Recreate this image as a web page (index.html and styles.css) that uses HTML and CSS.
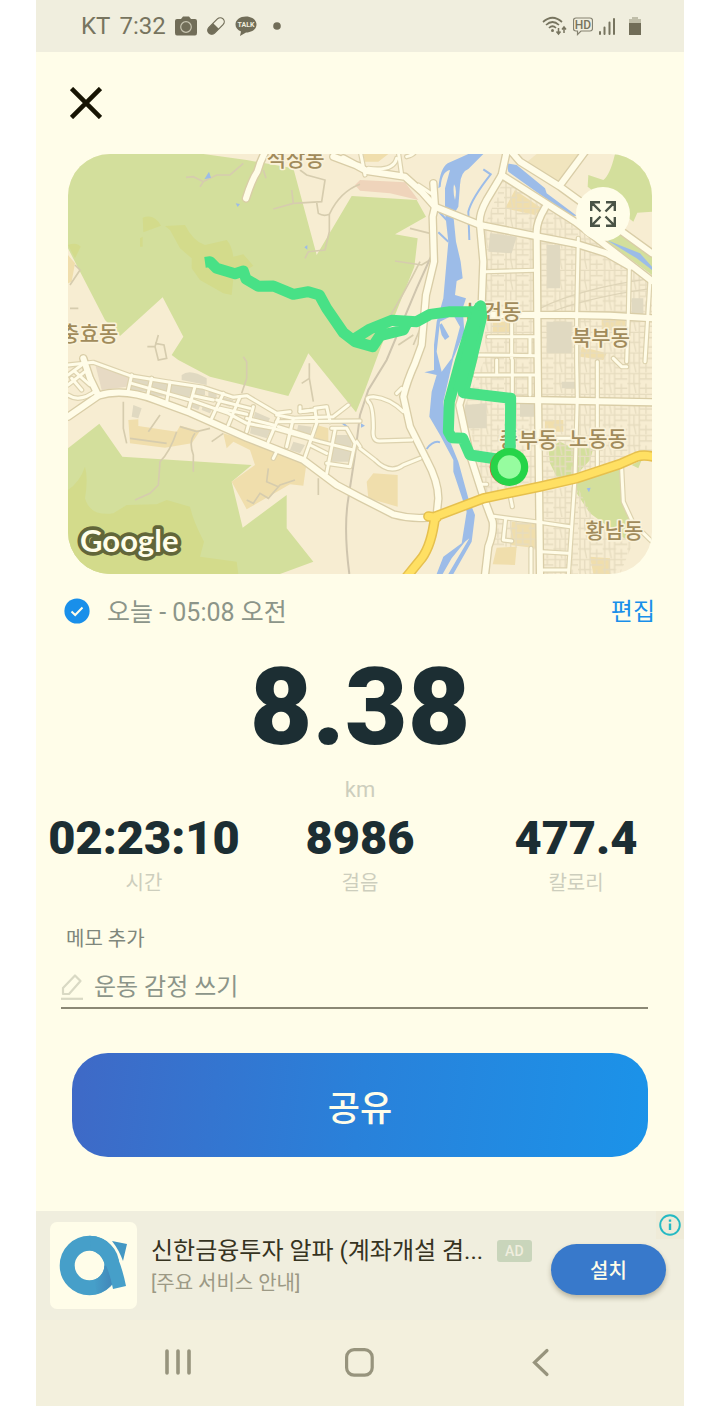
FILE: index.html
```html
<!DOCTYPE html>
<html lang="ko">
<head>
  <meta charset="UTF-8" />
  <meta name="viewport" content="width=device-width, initial-scale=1.0"/>
  <title>운동 기록</title>
  <link rel="stylesheet" href="styles.css">
</head>
<body>
  <div class="phone">
    <div class="status-bar">
      <div class="status-left">
        <span>KT</span>
        <span>7:32</span>
        <svg class="status-camera" width="22" height="20" viewBox="0 0 22 20">
          <path d="M2 3H6L8 0.500H14L16 3H20Q22 3 22 5V17Q22 19.500 20 19.500H2Q0 19.500 0 17V5Q0 3 2 3Z" fill="#716d58"/>
          <circle cx="11" cy="11" r="5.300" fill="none" stroke="#c8c5b1" stroke-width="1.200"/>
        </svg>
        <svg class="status-pill" width="20" height="20" viewBox="0 0 20 20">
          <g transform="rotate(-45 10 10)">
            <rect x="0" y="6" width="20" height="8" rx="4" fill="none" stroke="#716d58" stroke-width="1.200"/>
            <path d="M10 6H4A4 4 0 0 0 4 14H10Z" fill="#716d58"/>
          </g>
        </svg>
        <svg class="status-talk" width="22" height="20" viewBox="0 0 22 20">
          <path d="M11 0.500C17 0.500 21.500 4 21.500 8.500S17 16.500 11 16.500L5 20L6 15.500C2.500 14 0.500 11.500 0.500 8.500C0.500 4 5 0.500 11 0.500Z" fill="#716d58"/>
          <text x="11" y="11" text-anchor="middle" class="talk-text">TALK</text>
        </svg>
        <svg class="status-dot" width="8" height="8" viewBox="0 0 8 8"><circle cx="4" cy="4" r="3.800" fill="#716d58"/></svg>
      </div>
      <div class="status-right">
        <svg width="25" height="20" viewBox="0 0 25 20" fill="none" stroke="#77745f" stroke-width="1.700">
          <path d="M1 6Q10.500 -2.500 20 6M4 9Q10.500 3 17 9M7 12Q10.500 8.500 14 12"/>
          <circle cx="10.500" cy="14.500" r="1.500" fill="#77745f" stroke="none"/>
          <path d="M16.500 12V17M14.500 15.500L16.500 18L18.500 15.500M22 17V12M20 13.500L22 11L24 13.500" stroke-width="1.500"/>
        </svg>
        <svg width="20" height="20" viewBox="0 0 20 20">
          <path d="M3 2H17Q19.500 2 19.500 4.500V12.500Q19.500 15 17 15H8L4.500 18.500V15H3Q0.500 15 0.500 12.500V4.500Q0.500 2 3 2Z" fill="none" stroke="#858270" stroke-width="1.200"/>
          <text x="10" y="13" text-anchor="middle" class="hd-text">HD</text>
        </svg>
        <svg width="16" height="20" viewBox="0 0 16 20" stroke="#77745f" stroke-width="2" stroke-linecap="round">
          <path d="M1 18V16M5.500 18V11.500M10.500 18V6.500M15 18V3"/>
        </svg>
        <svg class="status-battery" width="12" height="20" viewBox="0 0 12 20">
          <path d="M3 1H9V3H12V8H0V3H3Z" fill="#c0bea9"/>
          <path d="M0 7H12V19H0Z" fill="#716d58"/>
        </svg>
      </div>
    </div>

    <div class="top-bar">
      <button class="close-btn" aria-label="닫기">
        <svg width="32" height="32" viewBox="0 0 32 32"><path d="M1.500 1.500L30.500 30.500M30.500 1.500L1.500 30.500" stroke="#171403" stroke-width="4.600"/></svg>
      </button>
    </div>

    <div class="map">
      <svg class="map-canvas" viewBox="24 27 1752 1260">
        <defs>
          <pattern id="blocks" width="74" height="62" patternUnits="userSpaceOnUse">
            <path d="M0 4H74M0 34H40M38 20H74M36 48H74M6 0V62M36 0V62M56 4V20M20 4V34M20 34L26 62M56 34V62" class="block-line"/>
          </pattern>
          <g id="roads-major">
            <path d="M24 815L115 752Q190 728 290 766L390 803L560 878L730 945L830 1020L900 1057L1000 1108Q1050 1122 1100 1118"/>
            <path d="M70 640L90 700L115 752"/>
            <path d="M615 22Q600 50 592 80Q575 105 558 160" class="thin"/>
            <path d="M820 35L900 65M850 40L920 78L1035 95L1085 140L1125 185L1260 240L1420 272L1550 297L1640 325L1710 365"/>
            <path d="M1120 115L1125 185L1118 215L1122 350L1098 450L1085 600L1065 655Q1040 710 1030 755L1050 845L1100 945Q1135 1010 1135 1060L1130 1110"/>
            <path d="M1340 20L1325 90L1280 165Q1255 210 1260 240L1270 350L1265 480L1240 640L1198 780L1230 930L1270 1055L1298 1130Q1302 1160 1285 1205L1275 1290"/>
            <path d="M1325 90L1545 230L1776 408M1350 15L1380 50L1500 125L1776 325M1502 118L1575 20"/>
            <path d="M1455 188Q1430 230 1430 260L1433 645L1440 1290"/>
            <path d="M1270 510H1530L1650 512L1780 520M1365 764L1780 772"/>
          </g>
          <g id="roads-minor">
            <path d="M24 660L100 652L210 692L330 712L430 727L520 757L560 752L650 805L690 800M720 800L765 795L770 830"/>
            <path d="M650 830L900 828M720 800V785M650 810L700 820L820 815L865 780M765 790L800 785L810 830M720 800L765 795"/>
            <path d="M215 690L205 735M275 700L262 755M330 712L320 770M405 725L385 795M490 745L455 820M540 755L505 840M580 785L560 860M655 820L625 890M770 835L735 935M825 855L800 985M700 820L680 905"/>
            <path d="M215 715L390 765L505 805L560 835L640 850L780 890L880 915M400 752L460 765M470 765L570 790M480 790L560 808M560 820L640 840M655 845L750 875M750 900L800 925"/>
            <path d="M815 850L860 850L885 895L870 965L800 955M890 890L900 905M650 920L640 940"/>
            <path d="M24 690L65 660M24 720L75 680M24 750Q60 775 110 735M35 700L65 735M45 680L90 720"/>
            <path d="M900 15L915 90M1015 20L1025 90M925 70Q1000 80 1010 40M1075 120L1120 150M1040 35Q1060 30 1065 20"/>
            <path d="M1275 380L1425 376M1285 575H1430M1255 630L1430 632M1355 520V640M1310 645V685M1245 690H1435M1357 645V755M1410 575V630M1410 695V750"/>
            <path d="M1555 280L1550 510V650L1552 755L1545 1000L1525 1290M1708 370L1705 510L1700 650M1612 650V965M1770 405L1755 650M1660 640L1685 665H1700"/>
            <path d="M1030 800Q990 760 940 755Q915 755 925 770Q940 780 940 850Q935 890 960 888L1055 885M900 910L945 945Q990 990 1030 960L1080 940"/>
            <path d="M1295 1113L1440 1132L1530 1145M1445 1220L1525 1225M1445 1275H1525M1413 1210V1290M1337 1120L1330 1185L1355 1188M1350 1050L1357 1085M1265 1018H1280"/>
            <path d="M1685 970L1690 1070L1720 1135L1776 1190M1440 880H1550M1010 745L1025 730"/>
          </g>
        </defs>

        <!-- land -->
        <rect x="24" y="27" width="1752" height="1260" class="land"/>
        <path d="M24 27H430L560 45L700 70L770 330L875 153L1070 165L1098 215L1005 268L1073 280L1063 365L1005 510L965 600L915 735L888 802L745 625L685 753L450 695L355 645L335 630L370 575L308 457L180 573L135 525L24 310Z" class="forest"/>
        <path d="M24 910L118 836L187 935L575 960L515 1010L548 1148L680 1050V1150L760 1250L660 1287H24Z" class="forest"/>
        <path d="M1665 27Q1650 90 1630 105L1585 90L1583 125L1720 230L1732 203L1776 200V27ZM1640 290L1680 265L1776 325V390Z" class="forest"/>
        <path d="M1465 910L1500 890L1540 910H1600L1590 945L1540 1000L1490 995L1470 955ZM1550 1015L1680 965L1685 1065L1730 1165L1700 1185L1590 1105L1550 1045ZM1715 960L1745 945L1735 970Z" class="forest"/>
        <path d="M315 243L375 240Q400 290 435 300L500 285Q515 300 520 335L550 328L580 362L520 400L515 450L490 445L420 405L395 370V340L360 310L330 255ZM248 218Q282 205 303 242L250 262ZM24 300Q50 290 62 305L45 340ZM240 280L248 275V305H240Z" class="scrub"/>
        <path d="M24 1035Q60 1010 75 965Q85 1000 75 1060Q90 1115 160 1105L200 1080L290 1078L320 1065L390 1085Q400 1130 432 1190L420 1235L530 1250L535 1287H24Z" class="scrub"/>
        <path d="M900 105L1035 112L1075 165L990 145L900 137L885 120Z" class="rose"/>
        <path d="M205 825L235 823V843L350 860L360 842L420 858L395 895L315 908L210 895ZM490 865L620 905L730 945L738 965L730 1022L690 1018L560 1093L515 1010L585 960L570 915L520 890L500 910Z" class="farm"/>
        <path d="M920 1010L940 985L1013 990V1085L925 1060ZM1365 135L1445 190L1425 210L1335 190ZM1455 825H1510V860H1455ZM1355 1130L1430 1138V1210L1350 1200ZM1310 1208L1370 1205L1365 1260L1298 1258ZM1590 1235L1650 1240V1287H1600ZM1565 605L1640 625L1630 645L1560 635ZM1625 525H1695V555H1625ZM770 840L805 850V895L765 880ZM1298 530H1355V565H1298ZM910 27H985L955 50H915ZM24 330L45 355L35 410L24 415Z" class="farm"/>
        <path d="M1390 60L1430 27H1570L1500 115Z" class="tan"/>
        <path d="M105 655L210 695L200 725L125 735Z" class="campus"/>

        <!-- city blocks -->
        <path d="M1330 105L1545 240L1710 365L1776 410V930L1550 990L1275 1050L1215 780L1275 640L1275 240Z" fill="url(#blocks)"/>
        <path d="M1290 1115L1530 1145V1287H1440V1215L1290 1200ZM1450 1040L1550 1020L1600 1120L1720 1190L1680 1287H1530V1140L1450 1120Z" fill="url(#blocks)"/>
        <path d="M1290 265L1370 275L1355 325L1285 320ZM1460 530H1535V625H1460ZM1215 780L1280 775V850H1210ZM1380 770H1425V815H1380ZM1505 710H1545V730H1505ZM1715 460H1750V510H1715ZM1460 300H1500V430H1460Z" class="grey-block"/>
        <path d="M215 695L268 705L260 740L212 735ZM280 705L325 715L318 755L270 750ZM335 715L400 730L380 770L330 755ZM365 690Q390 670 440 700V720L365 705ZM820 870H875V950H815ZM220 780L245 790L235 820L215 815Z" class="grey-block"/>
        <path d="M405 732H435V750H405ZM445 740H470V760H445ZM485 755L520 765L510 785L480 775ZM395 760L425 770L415 795L390 785ZM430 775L460 785L450 805L425 795ZM585 800L630 820L620 840L580 825ZM575 835L635 850L620 880L570 865ZM700 890L735 900L720 925L690 915ZM715 840L755 845L750 870L710 860Z" class="grey-block"/>

        <!-- footpaths and rail -->
        <g class="paths">
          <path d="M378 97L400 95L430 110L470 90L510 90L550 55M430 110L420 125M640 192L700 175L785 170L795 105L740 90L720 75M770 172L775 205Q790 215 808 208V260L795 315L745 320L735 340M808 208Q840 140 900 118M700 175L695 135M610 75L618 100"/>
          <path d="M30 420L60 375L45 360M30 490H55M262 605H285L295 570M285 605L295 645L320 640L312 600L285 595M550 635L560 650V700L545 745M748 655V700L725 715M748 700L760 770"/>
          <path d="M190 770V850L200 895M210 880L320 895M265 860L300 810M350 860Q330 920 300 950L295 1020L270 1045L225 1065M360 845L410 860L450 850M405 865Q385 890 400 930V980M560 1065L580 1075L600 1045L625 1060L660 1020L705 1005M655 1025L620 1010L625 970M490 865L455 890M775 1000V1050"/>
          <path d="M1110 345L1085 360L1005 348M1080 350Q1030 450 980 530M1050 250L1110 265M1015 600L1060 570M1085 540L1060 600"/>
        </g>
        <path d="M885 930L865 1060Q850 1150 868 1287M1115 330L1070 430L980 645L925 735L900 810L885 930" class="rail"/>
        <path d="M1440 490Q1560 430 1776 400M1440 515Q1560 460 1776 430" class="rail thin-rail"/>

        <!-- water -->
        <path d="M1163 55L1200 38L1225 27H1270L1225 72Q1202 80 1200 120L1195 185L1180 210L1188 290L1202 350L1208 400L1190 408L1185 450L1218 460L1208 490L1213 560L1180 640L1150 770L1160 865L1195 950L1225 1060L1245 1110L1235 1190L1180 1287H1165L1228 1180L1215 1190L1175 1240L1148 1287H1130L1150 1235L1205 1195L1220 1100L1180 980V945L1140 870L1108 815L1115 740L1130 690L1093 682L1122 675L1122 600L1130 530L1150 460L1165 290L1155 200L1155 130L1170 75Q1145 80 1142 125L1135 130Q1140 70 1163 55Z" class="water"/>
        <path d="M1340 55L1370 60L1455 130L1460 145L1550 212L1535 213L1435 145L1345 80ZM1640 285L1740 325L1776 365V375L1730 340Z" class="water"/>
        <path d="M1228 285L1225 200Q1235 160 1292 88L1270 73M1132 195L1160 225M1135 262L1165 290M1100 912Q1120 885 1140 892M840 828L865 848" class="stream"/>
        <path d="M433 103L447 80L453 98ZM527 175L540 177L533 186ZM733 307L742 300V314ZM1580 1030L1592 1028L1587 1042ZM903 835L915 842L903 848Z" class="water"/>
        <path d="M1182 118Q1192 130 1185 165Q1178 140 1182 118ZM1140 530L1180 510L1200 545L1175 640L1145 680L1130 620Z" class="land"/>
        <path d="M1145 535L1168 575L1155 585L1145 570L1138 540Z" class="water"/>

        <!-- roads -->
        <use href="#roads-minor" class="minor-casing"/>
        <use href="#roads-major" class="major-casing"/>
        <use href="#roads-minor" class="minor-fill"/>
        <use href="#roads-major" class="major-fill"/>
        <path d="M1040 1295L1085 1240Q1115 1200 1125 1115L1270 1060L1440 1025L1550 1000L1680 957L1730 935Q1750 928 1780 935M1105 1114L1130 1118" class="highway-casing"/>
        <path d="M1040 1295L1085 1240Q1115 1200 1125 1115L1270 1060L1440 1025L1550 1000L1680 957L1730 935Q1750 928 1780 935M1105 1114L1130 1118" class="highway-fill"/>

        <!-- place names -->
        <g class="place">
          <text x="620" y="62">석장동</text>
          <text x="1" y="589">충효동</text>
          <text x="1210" y="522">성건동</text>
          <text x="1536" y="599">북부동</text>
          <text x="1318" y="907">중부동</text>
          <text x="1527" y="903">노동동</text>
          <text x="1576" y="1179">황남동</text>
        </g>

        <!-- recorded route -->
        <path d="M435 352L450 350L470 370L525 386L550 378L558 402L595 424L640 423L700 448L745 440L778 450L800 490L850 563L885 590L938 605L960 572L1030 555L1045 525M885 580L930 552L995 526L1070 530L1110 508L1170 500H1250L1262 482" class="route"/>
        <path d="M1262 482L1240 520L1202 645L1168 770L1165 860L1175 878L1208 880L1230 930L1310 942M1262 482L1265 515L1232 655L1210 743L1352 760L1350 960" class="route"/>
        <path d="M1255 490L1217 655L1195 740" class="route"/>
        <circle cx="1262" cy="482" r="16" fill="#48e186"/>
        <circle cx="1343" cy="967" r="54" fill="#e0563c"/>
        <circle cx="1348" cy="966" r="57" fill="#26d449"/>
        <circle cx="1348" cy="966" r="35" fill="#96fc9f"/>

        <text x="60" y="1222" class="map-brand">Google</text>
      </svg>
      <button class="expand-btn" aria-label="지도 확대">
        <svg width="26" height="26" viewBox="0 0 26 26" fill="none" stroke="#4a5346" stroke-width="2.400">
          <path d="M1.200 10V1.200H10M1.200 1.200L10.500 10.500M16 1.200H24.800V10M24.800 1.200L15.500 10.500M1.200 16V24.800H10M1.200 24.800L10.500 15.500M16 24.800H24.800V16M24.800 24.800L15.500 15.500"/>
        </svg>
      </button>
    </div>

    <div class="date-row">
      <svg width="26" height="26" viewBox="0 0 26 26">
        <circle cx="13" cy="13" r="12.600" fill="#198fea"/>
        <path d="M7.500 13.500L11.200 17L18.500 9.500" fill="none" stroke="#fffde9" stroke-width="2"/>
      </svg>
      <span class="date">오늘 - 05:08 오전</span>
      <a class="edit-link" href="#">편집</a>
    </div>

    <div class="distance">
      <div class="distance-value">8.38</div>
      <div class="distance-unit">km</div>
    </div>

    <div class="stats">
      <div class="stat">
        <div class="stat-value">02:23:10</div>
        <div class="stat-label">시간</div>
      </div>
      <div class="stat">
        <div class="stat-value">8986</div>
        <div class="stat-label">걸음</div>
      </div>
      <div class="stat">
        <div class="stat-value">477.4</div>
        <div class="stat-label">칼로리</div>
      </div>
    </div>

    <div class="memo">
      <label for="memo">메모 추가</label>
      <div class="memo-field">
        <svg width="22" height="26" viewBox="0 0 22 26" fill="none" stroke="#d9d9c4" stroke-width="2.200">
          <path d="M2 20V14L14 1.500L19.500 7L8 20Z" stroke-linejoin="round"/>
          <path d="M0 24.800H22"/>
        </svg>
        <input type="text" id="memo" placeholder="운동 감정 쓰기">
      </div>
    </div>

    <button class="share-btn">공유</button>

    <div class="ad">
      <svg class="ad-logo" width="87" height="87" viewBox="0 0 87 87">
        <defs>
          <linearGradient id="tail" x1="0" y1="0" x2="1" y2="0">
            <stop offset="0" stop-color="#469fc9"/>
            <stop offset="1" stop-color="#4287b9"/>
          </linearGradient>
        </defs>
        <rect width="87" height="87" rx="7" fill="#fffde9"/>
        <circle cx="39.500" cy="43.500" r="22.300" fill="none" stroke="#469fc9" stroke-width="15"/>
        <path d="M54.500 43.500Q54 54 44 58L47 72Q57 69 62 62L58 44Z" fill="url(#tail)"/>
        <path d="M39.500 13.700Q54 14 62 25Q71 39 76 64L63 67Q60 50 54 40Q50 31 41 28Z" fill="#469fc9"/>
        <path d="M62 19L77 22L73 39Q69 28 62 19Z" fill="#4397c3"/>
      </svg>
      <div class="ad-text">
        <div class="ad-title-row">
          <span class="ad-title">신한금융투자 알파 (계좌개설 겸...</span>
          <span class="ad-badge">AD</span>
        </div>
        <div class="ad-desc">[주요 서비스 안내]</div>
      </div>
      <button class="install-btn">설치</button>
      <a class="ad-info" href="#" aria-label="광고 정보">
        <svg width="22" height="22" viewBox="0 0 22 22">
          <circle cx="11" cy="11" r="9.800" fill="none" stroke="#24b9c3" stroke-width="1.900"/>
          <path d="M11 9.500V16M11 5.500V7.700" stroke="#24b9c3" stroke-width="2.400"/>
        </svg>
      </a>
    </div>

    <div class="nav-bar">
      <button aria-label="최근 앱">
        <svg width="30" height="30" viewBox="0 0 30 30" stroke="#97947d" stroke-width="3.600" stroke-linecap="round"><path d="M4 3V25M15 3V25M26 3V25"/></svg>
      </button>
      <button aria-label="홈">
        <svg width="30" height="30" viewBox="0 0 30 30" fill="none" stroke="#97947d" stroke-width="3.200"><rect x="1.600" y="1.600" width="25.600" height="25.600" rx="7.500"/></svg>
      </button>
      <button aria-label="뒤로">
        <svg width="30" height="30" viewBox="0 0 30 30" fill="none" stroke="#97947d" stroke-width="3.200" stroke-linecap="round"><path d="M20 2.500L7.500 14.500L20 26.500"/></svg>
      </button>
    </div>
  </div>
</body>
</html>
```
FILE: styles.css
```css
* {
  box-sizing: border-box;
}

body {
  font-family: Roboto, "Noto Sans CJK KR", sans-serif;
  margin: 0;
  background-color: #fff;
  color: #1c2e33;
}

svg {
  display: block;
  flex-shrink: 0;
}

button {
  font-family: inherit;
  border: none;
  padding: 0;
  background: none;
  cursor: pointer;
}

.phone {
  width: 90%;
  min-height: 100vh;
  margin: 0 auto;
  background-color: #fffde9;
  display: flex;
  flex-direction: column;
}

/* status bar */
.status-bar {
  display: flex;
  justify-content: space-between;
  align-items: center;
  height: 52px;
  padding: 0 43px 0 45px;
  background-color: #f0eede;
  color: #77745f;
  font-size: 24px;
}

.status-left,
.status-right {
  display: flex;
  align-items: center;
}

.status-left {
  gap: 9px;
}

.status-right {
  gap: 6px;
}

.status-dot {
  margin-left: 7px;
}

.status-battery {
  margin-left: 8px;
}

.talk-text {
  font-size: 7px;
  font-weight: 700;
  fill: #f0eede;
}

.hd-text {
  font-size: 12px;
  font-weight: 500;
  fill: #77745f;
}

.top-bar {
  display: flex;
  align-items: center;
  height: 102px;
  padding: 0 34px;
}

/* map */
.map {
  position: relative;
  margin: 0 32px;
  border-radius: 42px;
  overflow: hidden;
}

.map-canvas {
  width: 100%;
  height: auto;
}

.land { fill: #f7edd2; }
.forest { fill: #d3df9c; }
.scrub { fill: #d3db8b; }
.rose { fill: #efd4bb; }
.farm { fill: #f0deac; }
.tan { fill: #f1e5be; }
.campus { fill: #e7dac4; }
.grey-block { fill: #e0d9c1; }
.water { fill: #9cbce8; }

.block-line {
  fill: none;
  stroke: #e6dcbf;
  stroke-width: 4;
}

.stream {
  fill: none;
  stroke: #9cbce8;
  stroke-width: 6;
}

.paths {
  fill: none;
  stroke: #d6ccae;
  stroke-width: 5;
}

.rail {
  fill: none;
  stroke: #cfc5ae;
  stroke-width: 6;
}

.thin-rail {
  stroke: #ded4b7;
  stroke-width: 4;
}

.minor-casing,
.minor-fill,
.major-casing,
.major-fill,
.highway-casing,
.highway-fill {
  fill: none;
  stroke-linejoin: round;
  stroke-linecap: round;
}

.minor-casing {
  stroke: #ddd2ae;
  stroke-width: 16;
}

.minor-fill {
  stroke: #fffce8;
  stroke-width: 9;
}

.major-casing {
  stroke: #d9cda7;
  stroke-width: 26;
}

.major-fill {
  stroke: #fffce8;
  stroke-width: 18;
}

.highway-casing {
  stroke: #e6c04e;
  stroke-width: 31;
}

.highway-fill {
  stroke: #ffe063;
  stroke-width: 22;
}

.place {
  font-family: "Noto Sans CJK KR", sans-serif;
  font-size: 63px;
  font-weight: 500;
  fill: #a18b5b;
  stroke: #faf2d9;
  stroke-width: 10;
  stroke-linejoin: round;
  paint-order: stroke;
}

.route {
  fill: none;
  stroke: #48e186;
  stroke-width: 33;
  stroke-linejoin: round;
}

.map-brand {
  font-family: Lato, sans-serif;
  font-size: 93px;
  font-weight: 700;
  fill: #fffde9;
  stroke: #626639;
  stroke-width: 22;
  stroke-linejoin: round;
  paint-order: stroke;
}

.expand-btn {
  position: absolute;
  top: 33px;
  right: 22px;
  width: 54px;
  height: 54px;
  border-radius: 50%;
  background-color: #fffde9;
  display: flex;
  justify-content: center;
  align-items: center;
}

/* workout summary */
.date-row {
  display: flex;
  align-items: center;
  height: 74px;
  padding: 0 29px 0 28px;
  font-size: 25px;
  color: #8c9589;
}

.date {
  margin-left: 17px;
  padding-bottom: 3px;
}

.edit-link {
  margin-left: auto;
  padding-bottom: 3px;
  font-size: 24px;
  color: #198fea;
  text-decoration: none;
}

.distance {
  text-align: center;
}

.distance-value {
  font-size: 108px;
  font-weight: 900;
  line-height: 118px;
}

.distance-unit {
  margin-top: 10px;
  font-size: 22px;
  line-height: 28px;
  color: #cdcebd;
}

.stats {
  display: grid;
  grid-template-columns: repeat(3, 1fr);
  margin-top: 6px;
  text-align: center;
}

.stat-value {
  font-size: 47px;
  font-weight: 900;
  line-height: 56px;
}

.stat-label {
  padding-top: 1px;
  font-size: 20px;
  line-height: 32px;
  color: #cdcebd;
}

.memo {
  margin: 28px 36px 0 25px;
}

.memo label {
  display: block;
  padding-left: 5px;
  font-size: 20px;
  line-height: 24px;
  color: #7f877c;
}

.memo-field {
  display: flex;
  align-items: center;
  gap: 11px;
  height: 48px;
  margin-top: 10px;
  padding-top: 6px;
  border-bottom: 2px solid #8b8875;
}

.memo-field input {
  flex: 1;
  min-width: 0;
  border: none;
  padding: 0;
  background: none;
  outline: none;
  font-family: inherit;
  font-size: 24px;
  color: #1c2e33;
}

.memo-field input::placeholder {
  color: #8c9589;
}

.share-btn {
  height: 104px;
  margin: 44px 36px 54px;
  border-radius: 36px;
  background: linear-gradient(97deg, #3f69c6, #2981da 50%, #1b93e9);
  color: #fffde9;
  font-size: 35px;
  font-weight: 500;
}

/* ad banner */
.ad {
  position: relative;
  display: flex;
  align-items: center;
  height: 109px;
  padding: 0 18px 0 14px;
  background-color: #f0eede;
}

.ad-text {
  flex: 1;
  min-width: 0;
  margin-left: 14px;
}

.ad-title-row {
  display: flex;
  align-items: center;
  gap: 14px;
}

.ad-title {
  font-size: 24px;
  line-height: 34px;
  white-space: nowrap;
  color: #36331f;
}

.ad-badge {
  padding: 0 8px;
  border-radius: 3px;
  background-color: #c9d5bb;
  color: #f0eede;
  font-size: 14px;
  font-weight: 500;
  line-height: 22px;
}

.ad-desc {
  font-size: 20px;
  line-height: 30px;
  color: #9c9985;
}

.install-btn {
  width: 115px;
  height: 51px;
  margin-top: 8px;
  border-radius: 26px;
  background-color: #3879cb;
  box-shadow: 0 3px 5px rgba(60, 50, 20, 0.3);
  color: #fffde9;
  font-size: 20px;
  font-weight: 500;
}

.ad-info {
  position: absolute;
  top: 0;
  right: 0;
  padding: 3px;
  background-color: #efebd8;
}

/* system navigation */
.nav-bar {
  display: flex;
  justify-content: space-between;
  align-items: center;
  flex: 1;
  min-height: 86px;
  padding: 0 127px;
  background-color: #f3f0dd;
}
```
